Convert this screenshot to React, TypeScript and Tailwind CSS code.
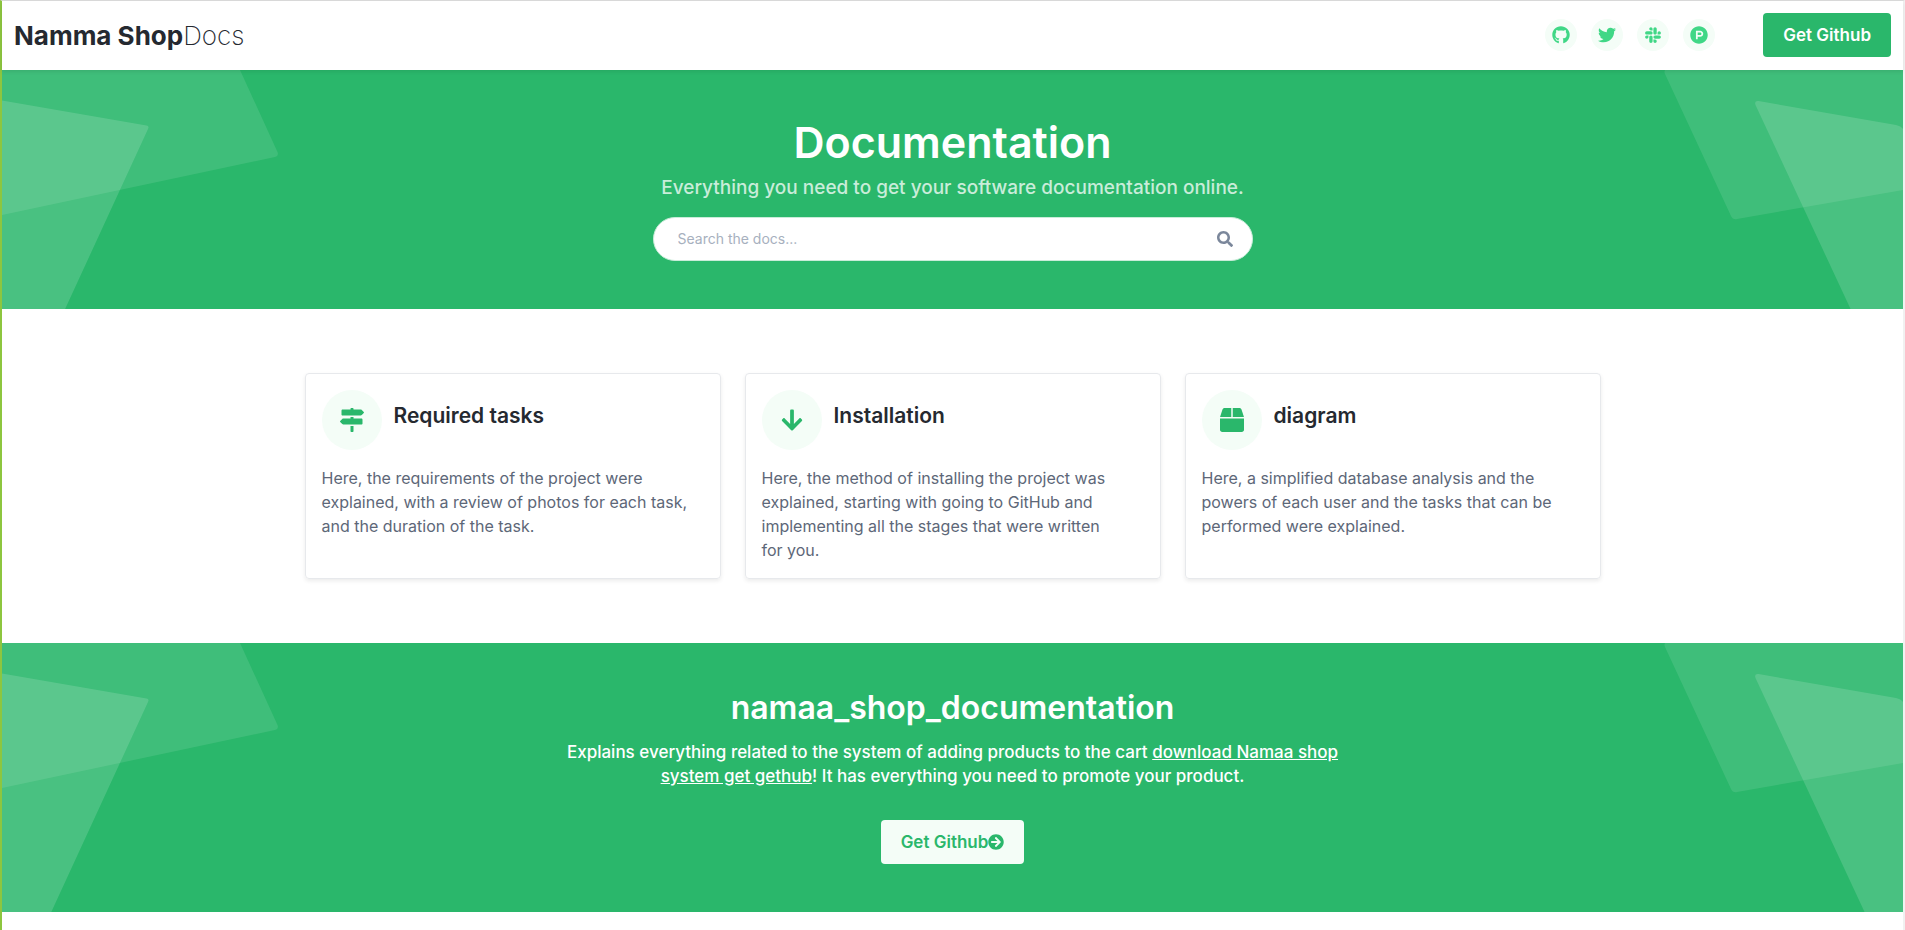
import React from "react";
import type { IconType } from "react-icons";
import {
  FaArrowCircleRight,
  FaArrowDown,
  FaBox,
  FaGithub,
  FaMapSigns,
  FaProductHunt,
  FaSearch,
  FaSlack,
  FaTwitter,
} from "react-icons/fa";

const socials: { label: string; icon: IconType }[] = [
  { label: "GitHub", icon: FaGithub },
  { label: "Twitter", icon: FaTwitter },
  { label: "Slack", icon: FaSlack },
  { label: "Product Hunt", icon: FaProductHunt },
];

const cards: { title: string; text: string; icon: IconType }[] = [
  {
    title: "Required tasks",
    text: "Here, the requirements of the project were explained, with a review of photos for each task, and the duration of the task.",
    icon: FaMapSigns,
  },
  {
    title: "Installation",
    text: "Here, the method of installing the project was explained, starting with going to GitHub and implementing all the stages that were written for\u00a0you.",
    icon: FaArrowDown,
  },
  {
    title: "diagram",
    text: "Here, a simplified database analysis and the powers of each user and the tasks that can be performed were explained.",
    icon: FaBox,
  },
];

function Backdrop() {
  return (
    <div aria-hidden="true" className="pointer-events-none absolute inset-0 flex justify-between overflow-hidden">
      <svg width="280" height="300" viewBox="0 0 280 300" fill="#fff">
        <path d="M0 0H238L275.500 82Q277 86 273 87L0 145Z" fillOpacity=".1" />
        <path d="M0 30.500L144.500 55.500Q147.500 56 146 59L35 300H0Z" fillOpacity=".15" />
      </svg>
      <svg width="243" height="300" viewBox="0 0 243 300" fill="#fff">
        <path d="M5 0H243V120L77 149Q73 150 71 146L5 4Q4 2 5 0Z" fillOpacity=".1" />
        <path d="M98.500 31L236 55Q241 56 243 59V300H219L95.500 35Q94 30.500 98.500 31Z" fillOpacity=".15" />
      </svg>
    </div>
  );
}

export default function App() {
  return (
    <div className="min-h-screen border-x-2 border-t border-t-[#dadada] border-r-[#f1f1f1] border-l-[#8dc63f] bg-white font-['Inter',sans-serif] text-[#5d6778]">
      <header className="relative z-10 flex h-[69px] items-center justify-between bg-white px-3 shadow-[0_2px_4px_rgba(0,0,0,0.08)]">
        <a href="#" className="text-[26px] leading-9 font-bold text-[#252930]">
          Namma Shop<span className="font-extralight">Docs</span>
        </a>
        <div className="flex items-center gap-12 pb-0.5">
          <ul className="flex gap-[14px]">
            {socials.map(({ label, icon: Icon }) => (
              <li key={label}>
                <a
                  href="#"
                  aria-label={label}
                  className="flex size-8 items-center justify-center rounded-full bg-[#f4fdf7] text-[#40d786]"
                >
                  <Icon size={18} />
                </a>
              </li>
            ))}
          </ul>
          <a href="#" className="rounded bg-[#2ab76b] px-5 py-[10px] text-[17px] leading-6 font-semibold text-white">
            Get Github
          </a>
        </div>
      </header>

      <section className="relative bg-[#2ab76b] pt-12 pb-12">
        <Backdrop />
        <div className="relative mx-auto flex max-w-[600px] flex-col text-center">
          <h1 className="text-[43px] leading-12 font-semibold text-white">Documentation</h1>
          <p className="pt-2 pb-4 text-[19px] leading-[27px] font-medium whitespace-nowrap text-white/75">
            Everything you need to get your software documentation online.
          </p>
          <form className="flex h-11 items-center rounded-full border border-[#c9ecd9] bg-white pr-[19px] pl-6">
            <input
              type="text"
              aria-label="Search the docs"
              placeholder="Search the docs..."
              className="min-w-0 flex-1 bg-transparent text-sm outline-none placeholder:text-[#a7b0be]"
            />
            <button type="button" aria-label="Search" className="text-[#7b879b]">
              <FaSearch size={16} />
            </button>
          </form>
        </div>
      </section>

      <main className="px-6 py-16">
        <div className="mx-auto grid max-w-[1296px] grid-cols-3 gap-6">
          {cards.map(({ title, text, icon: Icon }) => (
            <article
              key={title}
              className="rounded border border-[#e7e9ec] p-4 shadow-[0_2px_4px_rgba(0,0,0,0.08)]"
            >
              <div className="mb-4 flex gap-3">
                <span className="flex size-[60px] shrink-0 items-center justify-center rounded-full bg-[#f4fdf7] text-[#2ab76b]">
                  <Icon size={24} />
                </span>
                <h2 className="text-[21px] leading-[52px] font-semibold text-[#252930]">{title}</h2>
              </div>
              <p className="text-base leading-6">{text}</p>
            </article>
          ))}
        </div>
      </main>

      <section className="relative bg-[#2ab76b] py-12 text-center text-white">
        <Backdrop />
        <div className="relative mx-auto flex max-w-[800px] flex-col items-center">
          <h2 className="text-[32px] leading-[33px] font-semibold">namaa_shop_documentation</h2>
          <p className="mt-4 mb-8 text-[17px] leading-6 font-medium">
            Explains everything related to the system of adding products to the cart{" "}
            <a href="#" className="underline">
              download Namaa shop system get gethub
            </a>
            ! It has everything you need to promote your product.
          </p>
          <a
            href="#"
            className="flex items-center rounded bg-[#f4fdf7] px-5 py-[10px] text-[17px] leading-6 font-semibold text-[#2ab76b]"
          >
            Get Github
            <FaArrowCircleRight size={16} />
          </a>
        </div>
      </section>
    </div>
  );
}
